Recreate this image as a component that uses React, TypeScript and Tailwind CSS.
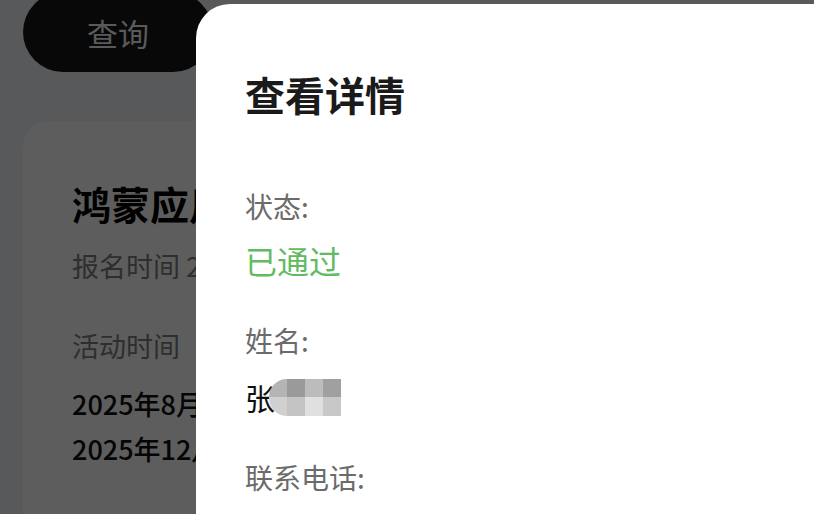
import { Fragment } from "react";

const font = { fontFamily: '"Noto Sans CJK SC", "Noto Sans", sans-serif' };

// pixelated name blur
const mosaic = [
  ["#b4b4b4", "#9a9a9a", "#bcbcbc", "#a0a0a0"],
  ["#d0d0d0", "#c3c3c3", "#e0e0e0", "#c8c8c8"],
];

const App = () => {
  return (
    <div className="relative w-[814px] h-[514px] overflow-hidden bg-[#58595b]" style={font}>
      {/* page behind the sheet */}
      <div className="flex flex-col pl-[23px]">
        <div className="-mt-[8px] flex h-[80px] w-[190px] items-center justify-center rounded-full bg-[#080808] pt-[2px]">
          <span className="text-[31px] leading-[40px] text-[#5a5a5a]">查询</span>
        </div>
        <div className="mt-[49px] h-[420px] w-[768px] overflow-hidden rounded-[26px] bg-[#5d5d5d] pl-[49px] pt-[58px]">
          <div className="whitespace-nowrap text-[39px] font-bold leading-[48px] text-black">鸿蒙应用开发者活动</div>
          <div className="mt-[21px] whitespace-nowrap text-[27px] leading-[36px] text-[#2e2e2e]">报名时间 2025年7月20日</div>
          <div className="mt-[44px] text-[27px] leading-[36px] text-[#2e2e2e]">活动时间</div>
          <div className="mt-[22px] whitespace-nowrap text-[27px] font-medium leading-[36px] text-[#050505]">2025年8月1日 09:00 至</div>
          <div className="mt-[9px] whitespace-nowrap text-[27px] font-medium leading-[36px] text-[#050505]">2025年12月31日 18:00</div>
        </div>
      </div>

      {/* detail sheet */}
      <div className="absolute left-[196px] top-[4px] right-0 bottom-0 rounded-tl-[34px] bg-white pl-[49px] pt-[66px]">
        <div className="text-[40px] font-bold leading-[48px] text-[#1a1a1a]">查看详情</div>
        <div className="mt-[70px] text-[28px] leading-[36px] text-[#6b6b6b]">状态:</div>
        <div className="mt-[16px] text-[32px] leading-[40px] text-[#62bb62]">已通过</div>
        <div className="mt-[42px] text-[28px] leading-[36px] text-[#6b6b6b]">姓名:</div>
        <div className="mt-[19px] flex h-[40px] items-center">
          <span className="text-[30px] leading-[36px] text-[#111]">张</span>
          <div className="-ml-[6px] grid grid-cols-[repeat(4,18px)] grid-rows-[repeat(2,18.5px)] overflow-hidden rounded-l-[18px]">
            {mosaic.map((row, r) => (
              <Fragment key={r}>
                {row.map((c, i) => (
                  <div key={i} style={{ backgroundColor: c }} />
                ))}
              </Fragment>
            ))}
          </div>
        </div>
        <div className="mt-[42px] text-[28px] leading-[36px] text-[#6b6b6b]">联系电话:</div>
      </div>
    </div>
  );
};

export default App;
